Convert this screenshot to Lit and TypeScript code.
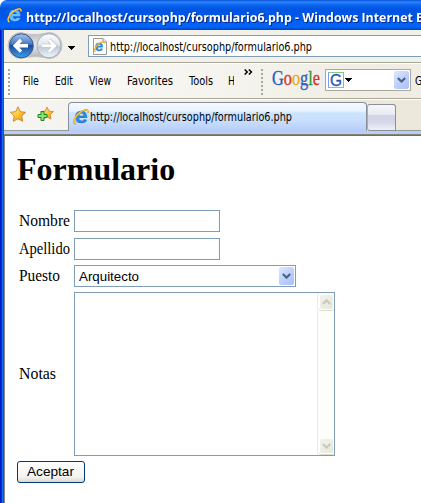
import { LitElement, html, css, svg } from "lit";
import { customElement } from "lit/decorators.js";

const fitted = (text: string, width: number, kind = "ui", baseline = 12) => html`
  <svg class="fit ${kind}" width=${width} height="18" role="img">
    <text x="0" y=${baseline} textLength=${width} lengthAdjust="spacingAndGlyphs">${text}</text>
  </svg>`;

const swoosh = "M2.2 14.6C-.3 13.2 2 7.4 6.6 3.8C10.6 .6 15.4 -.2 15 3.2";

const ieLogo = (size: number) => html`
  <svg class="logo" width=${size} height=${size} viewBox="0 0 16 16">
    <text class="e-glyph" x="1.6" y="14.2" textLength="13" lengthAdjust="spacingAndGlyphs">e</text>
    <path d=${swoosh} fill="none" stroke="#b9801c" stroke-width="1.8" stroke-linecap="round"/>
    <path d=${swoosh} fill="none" stroke="#ffcf4d" stroke-width="1.2" stroke-linecap="round"/>
  </svg>`;

const chevron = (color: string, up = false) => html`
  <svg width="9" height="6" viewBox="0 0 9 6">
    <path d=${up ? "M.8 5L4.5 1.4L8.2 5" : "M.8 1L4.5 4.6L8.2 1"} fill="none" stroke=${color} stroke-width="2.1"/>
  </svg>`;

const caret = html`<svg class="caret" width="7" height="4" shape-rendering="crispEdges"><path d="M0 0H7L3.5 4Z"/></svg>`;

const starPath = "M8 .8L10.3 5.7L15.6 6.3L11.7 10L12.7 15.3L8 12.7L3.3 15.3L4.3 10L.4 6.3L5.7 5.7Z";

const gold = svg`
  <defs><linearGradient id="gold" x1="0" y1="0" x2="1" y2="1">
    <stop offset="0" stop-color="#fff3a8"/><stop offset=".5" stop-color="#ffc63a"/><stop offset="1" stop-color="#ee8a12"/>
  </linearGradient></defs>`;

@customElement("app-root")
export class AppRoot extends LitElement {
  static styles = css`
    :host { display: block; width: 421px; height: 503px; overflow: hidden; background: #fff; }
    * { box-sizing: border-box; }
    svg { display: block; flex: none; }
    .window { display: flex; flex-direction: column; width: 421px; height: 503px; }
    .fit { overflow: visible; }
    .ui { font: 11.6px "DejaVu Sans Condensed", "DejaVu Sans", sans-serif; fill: #000; }
    .arial { font: 13.33px "Liberation Sans", Arial, sans-serif; }
    .caption { font: bold 13px "Open Sans", "Noto Sans", sans-serif; fill: #fff; filter: drop-shadow(1px 1px 0 #0b2a8c); }
    .serif { font: 16px "Liberation Serif", "Times New Roman", serif; }
    .e-glyph { font: bold 22px "Liberation Sans", Arial, sans-serif; fill: #2b8fe0; stroke: #1b62b5; stroke-width: .4px; }
    .titlebar .e-glyph { fill: #5fbcf8; stroke: #8ad4ff; }
    .titlebar { height: 30px; flex: none; display: flex; padding: 8px 0 0 7px; gap: 4px; border-top-left-radius: 7px;
      background: linear-gradient(#0a4fd8 0, #2a86ff 2px, #0d66f0 5px, #0055e2 9px, #0057e8 17px, #0264fb 25px, #0163f8 27px, #0042c4 30px); }
    .body { flex: 1; display: flex; flex-direction: column; border-left: 4px solid #0b55e2; border-image: linear-gradient(to right, #0018c8 0 1px, #0831d9 1px 2px, #166aee 2px 3px, #0855dd 3px) 0 0 0 4; }
    .nav { height: 32px; flex: none; display: flex; align-items: flex-start; padding: 1px 0 0 3px; background: #f1f0e9; }
    .nav > .caret { margin: 15px 0 0 5px; }
    .address { flex: 1; height: 22px; margin: 4px 0 0 13px; display: flex; gap: 2px; padding: 1px 2px; background: #fff; border: 1px solid #7f9db9; border-right: 0; }
    .address .page { margin: 1px 0 0 1px; }
    .menu { height: 37px; flex: none; display: flex; align-items: flex-start; border-top: 1px solid #aca899; border-bottom: 1px solid #aca899;
      background: linear-gradient(to right, #fcfcfb, #efede4 90%); box-shadow: inset 0 1px #fff; }
    .grip { width: 2px; height: 26px; margin: 6px 0 0 4px; flex: none; background: repeating-linear-gradient(#aaa795 0 2px, transparent 2px 4px); }
    .items { display: flex; padding: 10px 0 0 13px; gap: 16px; flex: none; }
    .cut { width: 6px; height: 18px; margin-left: -1px; overflow: hidden; }
    .more { margin: 6px 0 0 10px; }
    .grip.second { margin-left: 8px; }
    .google { margin: 6px 0 0 9px; overflow: visible; font: 20px "Liberation Serif", serif; }
    .google text { stroke-width: .35px; }
    .blue { fill: #2c5cc5; stroke: #2c5cc5; }
    .red { fill: #d5372c; stroke: #d5372c; }
    .yellow { fill: #e6ae1c; stroke: #e6ae1c; }
    .green { fill: #2f9a3c; stroke: #2f9a3c; }
    .search { width: 86px; height: 22px; margin: 6px 0 0 4px; display: flex; align-items: center; padding: 1px; background: #fff; border: 1px solid #aca899; flex: none; }
    .search .caret { margin-left: 1px; }
    .gee { border: 1px solid; border-color: #86ca80 #ee8a80 #86ca80 #7ba0e2; margin-left: 1px; font: 16px "Liberation Sans", sans-serif; fill: #2853b7; stroke: #2853b7; stroke-width: .3px; }
    .drop { display: flex; align-items: center; justify-content: center; border-radius: 2px; background: linear-gradient(135deg, #dce6ff, #b9cdfb 60%, #aabff5); }
    .search .drop { width: 15px; height: 18px; margin-left: auto; }
    .side { margin: 10px 0 0 4px; }
    .tabs { height: 37px; flex: none; display: grid; grid-template-rows: 31px 5px; background: linear-gradient(to right, #f6f5f2, #ece9dc 85%); border-top: 1px solid #fff; }
    .row { display: flex; }
    .stars { width: 64px; height: 31px; display: flex; gap: 11px; padding: 6px 0 0 6px; border-bottom: 1px solid #919b9c; flex: none; }
    .tab { width: 299px; height: 29px; margin-top: 2px; display: flex; gap: 1px; padding: 6px 0 0 4px; flex: none;
      border: 1px solid #8b8f98; border-bottom: 0; border-radius: 4px 4px 0 0; background: linear-gradient(#f4f9ff, #e8f3ff 28%, #cce3ff 36%, #cbe2fe 55%, #b7cdf8); }
    .newtab { width: 29px; height: 27px; margin-top: 4px; flex: none; border: 1px solid #8b8f98; border-left-color: #a8abb5; border-radius: 3px 3px 0 3px;
      background: linear-gradient(#f7f7fa, #e9eaf3 38%, #d2d4e7 42%, #d6d8e9 70%, #f1f1f7); }
    .rest { flex: 1; height: 31px; border-bottom: 1px solid #919b9c; }
    .strip { background: linear-gradient(#b9cdf8 0 3px, #858372 3px 4px, #716f64 4px); }
    .content { flex: 1; padding: 0 0 0 12px; background: #fff; border-left: 1px solid #8b897c; display: flex; flex-direction: column; align-items: flex-start; }
    h1 { margin: 15px 0 0; height: 59px; font: bold 32px/37px "Liberation Serif", "Times New Roman", serif; color: #000; }
    .form { display: grid; grid-template-columns: 55px 261px; grid-template-rows: 23px 22px 22px 164px; row-gap: 5px; padding-left: 2px; align-items: center; }
    .box { height: 22px; border: 1px solid #7f9db9; background: #fff; width: 146px; }
    .form > :nth-child(-n+2) { align-self: start; }
    .form > svg:first-child { margin-top: 2px; }
    .select { width: 222px; display: flex; padding: 1px 1px 1px 4px; }
    .select .drop { width: 15px; height: 18px; margin-left: auto; }
    .area { width: 261px; height: 164px; display: flex; justify-content: flex-end; }
    .scroll { width: 17px; display: flex; flex-direction: column; justify-content: space-between; align-items: center; padding: 1px 0 0; background: #fdfdf9; border-left: 1px solid #eeede5; }
    .arrow { width: 15px; height: 16px; display: flex; align-items: center; justify-content: center; border: 1px solid #fff; border-radius: 3px; background: linear-gradient(135deg, #f3f2ea, #e8e7dc); box-shadow: 0 1px #d9d8ca; }
    .arrow:last-child { margin-bottom: 1px; }
    .submit { width: 68px; height: 22px; margin-top: 5px; padding: 0 0 0 9px; display: flex; border: 1px solid #003c74; border-radius: 3px; background: linear-gradient(#fff, #f3f3ef 75%, #dcd7cc); }
  `;

  render() {
    return html`
      <div class="window">
        <header class="titlebar">${ieLogo(15)}${fitted("http://localhost/cursophp/formulario6.php - Windows Internet E", 397, "caption", 14)}</header>
        <div class="body">
          ${this.nav()}
          ${this.menu()}
          ${this.tabs()}
          ${this.form()}
        </div>
      </div>`;
  }

  private nav() {
    return html`
      <nav class="nav">
        <svg width="56" height="29" viewBox="0 0 56 29">
          <defs>
            <linearGradient id="rim" x2="0" y2="1"><stop stop-color="#b8bac0"/><stop offset=".5" stop-color="#e7e8eb"/><stop offset="1" stop-color="#aeb0b5"/></linearGradient>
            <linearGradient id="back" x2="0" y2="1"><stop stop-color="#a9c3e8"/><stop offset=".42" stop-color="#4a79c4"/><stop offset=".5" stop-color="#1b4aa5"/><stop offset="1" stop-color="#3da0e8"/></linearGradient>
            <linearGradient id="fwd" x2="0" y2="1"><stop stop-color="#fff"/><stop offset=".45" stop-color="#dfe6ed"/><stop offset=".55" stop-color="#c0cad6"/><stop offset="1" stop-color="#f2f6fa"/></linearGradient>
          </defs>
          <path d="M14 1.5Q22 4 29 3.5Q36 3 42 1.5A13 13 0 0 1 42 27.5Q36 26 29 25.5Q22 25.5 14 27.5A13 13 0 0 1 14 1.5Z" fill="url(#rim)" stroke="#c2c3c6"/>
          <circle cx="14.3" cy="14.8" r="12" fill="url(#back)" stroke="#35558c"/>
          <circle cx="42" cy="14.8" r="12" fill="url(#fwd)" stroke="#a4adb8"/>
          <path d="M21 14.8H8.5M14 9L8.2 14.8L14 20.6" fill="none" stroke="#fff" stroke-width="3.4"/>
          <path d="M35 14.8H47.5M42 9L47.8 14.8L42 20.6" fill="none" stroke="#aeb8c4" stroke-width="4.2"/>
          <path d="M35 14.8H47.5M42 9L47.8 14.8L42 20.6" fill="none" stroke="#fff" stroke-width="3"/>
        </svg>
        ${caret}
        <div class="address">
          <svg class="page" width="16" height="17" viewBox="0 0 16 17">
            <path d="M1.5 .5H11L14.5 4V16.5H1.5Z" fill="#fbfbf8" stroke="#9a9a90"/><path d="M11 .5V4H14.5" fill="#e5e5df" stroke="#9a9a90"/>
            <text class="e-glyph" transform="translate(2.8 13.4) scale(.68)">e</text>
            <path d="M3.6 13.5C1.5 12.6 3.6 8 7 5.5C10 3.3 12.8 3.3 12 5.6" fill="none" stroke="#efb12d" stroke-width="1.4"/>
          </svg>
          ${fitted("http://localhost/cursophp/formulario6.php", 202, "ui", 14)}
        </div>
      </nav>`;
  }

  private menu() {
    return html`
      <div class="menu">
        <div class="grip"></div>
        <div class="items">
          ${fitted("File", 16)}${fitted("Edit", 18)}${fitted("View", 22)}${fitted("Favorites", 46)}${fitted("Tools", 24)}
          <div class="cut">${fitted("H", 7)}</div>
        </div>
        <svg class="more" width="9" height="6" viewBox="0 0 9 6"><path d="M.7 .5L3.2 3L.7 5.5M4.9 .5L7.4 3L4.9 5.5" fill="none" stroke="#000" stroke-width="1.5"/></svg>
        <div class="grip second"></div>
        <svg class="google" width="49" height="22">
          <text x="0" y="16" textLength="48" lengthAdjust="spacingAndGlyphs"><tspan class="blue">G</tspan><tspan class="red">o</tspan><tspan class="yellow">o</tspan><tspan class="blue">g</tspan><tspan class="green">l</tspan><tspan class="red">e</tspan></text>
        </svg>
        <div class="search">
          <svg class="gee" width="16" height="16"><text x="1" y="13" textLength="12" lengthAdjust="spacingAndGlyphs">G</text></svg>
          ${caret}
          <div class="drop">${chevron("#4d6185")}</div>
        </div>
        <div class="side">${fitted("Go", 13, "ui", 12)}</div>
      </div>`;
  }

  private tabs() {
    return html`
      <div class="tabs">
        <div class="row">
          <div class="stars">
            <svg width="16" height="16" viewBox="0 0 16 16">${gold}<path d=${starPath} fill="url(#gold)" stroke="#c98422" stroke-width=".9" stroke-linejoin="round"/></svg>
            <svg width="17" height="16" viewBox="0 0 17 16">${gold}
              <path d=${starPath} transform="translate(3.4 .4) scale(.83)" fill="url(#gold)" stroke="#c98422" stroke-linejoin="round"/>
              <path d="M4 5.5H7V8.5H10V11.5H7V14.5H4V11.5H1V8.5H4Z" fill="#8fe07c" stroke="#188a1c" stroke-linejoin="round"/>
            </svg>
          </div>
          <div class="tab">${ieLogo(16)}${fitted("http://localhost/cursophp/formulario6.php", 202)}</div>
          <div class="newtab"></div>
          <div class="rest"></div>
        </div>
        <div class="strip"></div>
      </div>`;
  }

  private form() {
    return html`
      <main class="content">
        <h1>Formulario</h1>
        <div class="form">
          ${fitted("Nombre", 51, "serif", 14)}<div class="box"></div>
          ${fitted("Apellido", 51, "serif", 14)}<div class="box"></div>
          ${fitted("Puesto", 41, "serif", 14)}
          <div class="box select">${fitted("Arquitecto", 60, "arial", 14)}<div class="drop">${chevron("#4d6185")}</div></div>
          ${fitted("Notas", 37, "serif", 14)}
          <div class="box area"><div class="scroll"><div class="arrow">${chevron("#c9c8bd", true)}</div><div class="arrow">${chevron("#c9c8bd")}</div></div></div>
        </div>
        <div class="submit">${fitted("Aceptar", 47, "arial", 14)}</div>
      </main>`;
  }
}
